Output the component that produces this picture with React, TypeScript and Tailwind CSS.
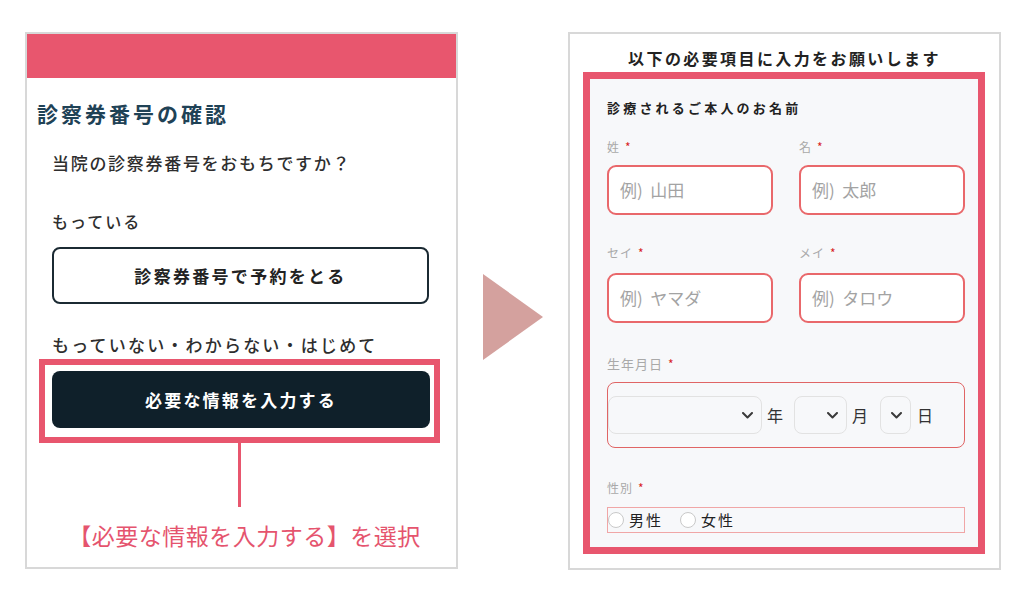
import React from 'react';

const jp = { fontFamily: '"Noto Sans CJK JP", "Noto Sans", sans-serif' };

function Req({ label, className = '' }: { label: string; className?: string }) {
  return (
    <div className={`h-[16px] flex items-center text-[12px] leading-[16px] text-[#a9a9a9] tracking-[1px] ${className}`}>
      {label}
      <span className="ml-[5px] text-[#d81f26] text-[12px]">*</span>
    </div>
  );
}

function TextInput({ placeholder }: { placeholder: string }) {
  return (
    <div className="h-[50px] bg-white border-2 border-[#e9686b] rounded-[9px] flex items-center pl-[11px] text-[17px] text-[#a3a3a3] whitespace-pre">
      {placeholder}
    </div>
  );
}

function Chevron() {
  return (
    <svg width="11" height="7" viewBox="0 0 11 7" fill="none">
      <path d="M1 1l4.5 4.5L10 1" stroke="#3a3a3a" strokeWidth="2" strokeLinecap="round" strokeLinejoin="round" />
    </svg>
  );
}

function FakeSelect({ width }: { width: string }) {
  return (
    <div className={`${width} h-[38px] rounded-[8px] border border-[#e2e2e2] bg-[#f7f8fa] flex items-center justify-end pr-[8px]`}>
      <Chevron />
    </div>
  );
}

function Radio({ label }: { label: string }) {
  return (
    <div className="flex items-center">
      <span className="w-[16px] h-[16px] rounded-full border border-[#c9c9c9] bg-white" />
      <span className="ml-[5px] text-[15px] tracking-[2px] text-[#222]">{label}</span>
    </div>
  );
}

export default function App() {
  return (
    <div className="w-[1025px] h-[601px] bg-white flex items-start pt-[32px] pl-[25px]" style={jp}>
      {/* left: confirmation screen */}
      <div className="w-[433px] h-[537px] border-2 border-[#d8d8d8] flex flex-col">
        <div className="h-[44px] bg-[#e8566e]" />
        <h2 className="mt-[21px] ml-[10px] text-[21px] leading-[28px] font-bold tracking-[3px] text-[#1f4256]">
          診察券番号の確認
        </h2>
        <p className="mt-[24px] ml-[25px] text-[17px] leading-[24px] font-medium tracking-[1.7px] text-[#2e2e2e]">
          当院の診察券番号をおもちですか？
        </p>
        <p className="mt-[34px] ml-[25px] text-[16px] leading-[24px] font-medium tracking-[2px] text-[#2e2e2e]">もっている</p>
        <div className="mt-[14px] ml-[25px] w-[377px] h-[57px] border-2 border-[#1b2a33] rounded-[8px] flex items-center justify-center text-[17px] font-bold tracking-[2.3px] text-[#222]">
          診察券番号で予約をとる
        </div>
        <p className="mt-[29px] ml-[25px] text-[17px] leading-[24px] font-medium tracking-[2.2px] text-[#2e2e2e]">
          もっていない・わからない・はじめて
        </p>
        <div className="mt-[2px] ml-[12px] w-[401px] border-[6px] border-[#e8566e] pl-[7px] pt-[6px] pr-[4px] pb-[9px]">
          <div className="h-[57px] bg-[#0f202a] rounded-[8px] flex items-center justify-center text-[17px] font-bold tracking-[2.2px] text-white">
            必要な情報を入力する
          </div>
        </div>
        <div className="ml-[211px] w-[3px] h-[64px] bg-[#e8566e]" />
        <p className="mt-[12px] pl-[6px] text-center text-[23px] leading-[32px] tracking-[0.5px] text-[#e5546e]">
          【必要な情報を入力する】を選択
        </p>
      </div>

      {/* arrow */}
      <div className="self-center ml-[25px] mr-[25px]">
        <svg width="60" height="86" viewBox="0 0 60 86">
          <polygon points="0,0 60,43 0,86" fill="#d4a19e" />
        </svg>
      </div>

      {/* right: input form */}
      <div className="w-[433px] h-[538px] border-2 border-[#d8d8d8] flex flex-col">
        <h3 className="mt-[12px] text-center text-[16px] leading-[24px] font-bold tracking-[2.4px] text-[#222]">
          以下の必要項目に入力をお願いします
        </h3>
        <div className="mt-[2px] ml-[13px] w-[402px] h-[482px] border-[7px] border-[#e8566e] bg-[#f7f8fa] pl-[17px] pr-[13px] pt-[19px]">
          <p className="text-[13px] leading-[20px] font-bold tracking-[3.2px] text-[#222]">診療されるご本人のお名前</p>

          <div className="mt-[21px] grid grid-cols-2 gap-x-[26px]">
            <div>
              <Req label="姓" />
              <div className="mt-[10px]"><TextInput placeholder="例)  山田" /></div>
            </div>
            <div>
              <Req label="名" />
              <div className="mt-[10px]"><TextInput placeholder="例)  太郎" /></div>
            </div>
          </div>

          <div className="mt-[30px] grid grid-cols-2 gap-x-[26px]">
            <div>
              <Req label="セイ" />
              <div className="mt-[12px]"><TextInput placeholder="例)  ヤマダ" /></div>
            </div>
            <div>
              <Req label="メイ" />
              <div className="mt-[12px]"><TextInput placeholder="例)  タロウ" /></div>
            </div>
          </div>

          <Req label="生年月日" className="mt-[33px] text-[13px]" />
          <div className="mt-[10px] h-[66px] border-[1.5px] border-[#e06565] rounded-[8px] flex items-center text-[16px] text-[#333]">
            <FakeSelect width="w-[154px]" />
            <span className="ml-[5px]">年</span>
            <span className="ml-[11px]"><FakeSelect width="w-[53px]" /></span>
            <span className="ml-[5px]">月</span>
            <span className="ml-[12px]"><FakeSelect width="w-[31px]" /></span>
            <span className="ml-[6px]">日</span>
          </div>

          <Req label="性別" className="mt-[32px]" />
          <div className="mt-[11px] h-[26px] border border-[#f0a6a6] flex items-center gap-[17px]">
            <Radio label="男性" />
            <Radio label="女性" />
          </div>
        </div>
      </div>
    </div>
  );
}
